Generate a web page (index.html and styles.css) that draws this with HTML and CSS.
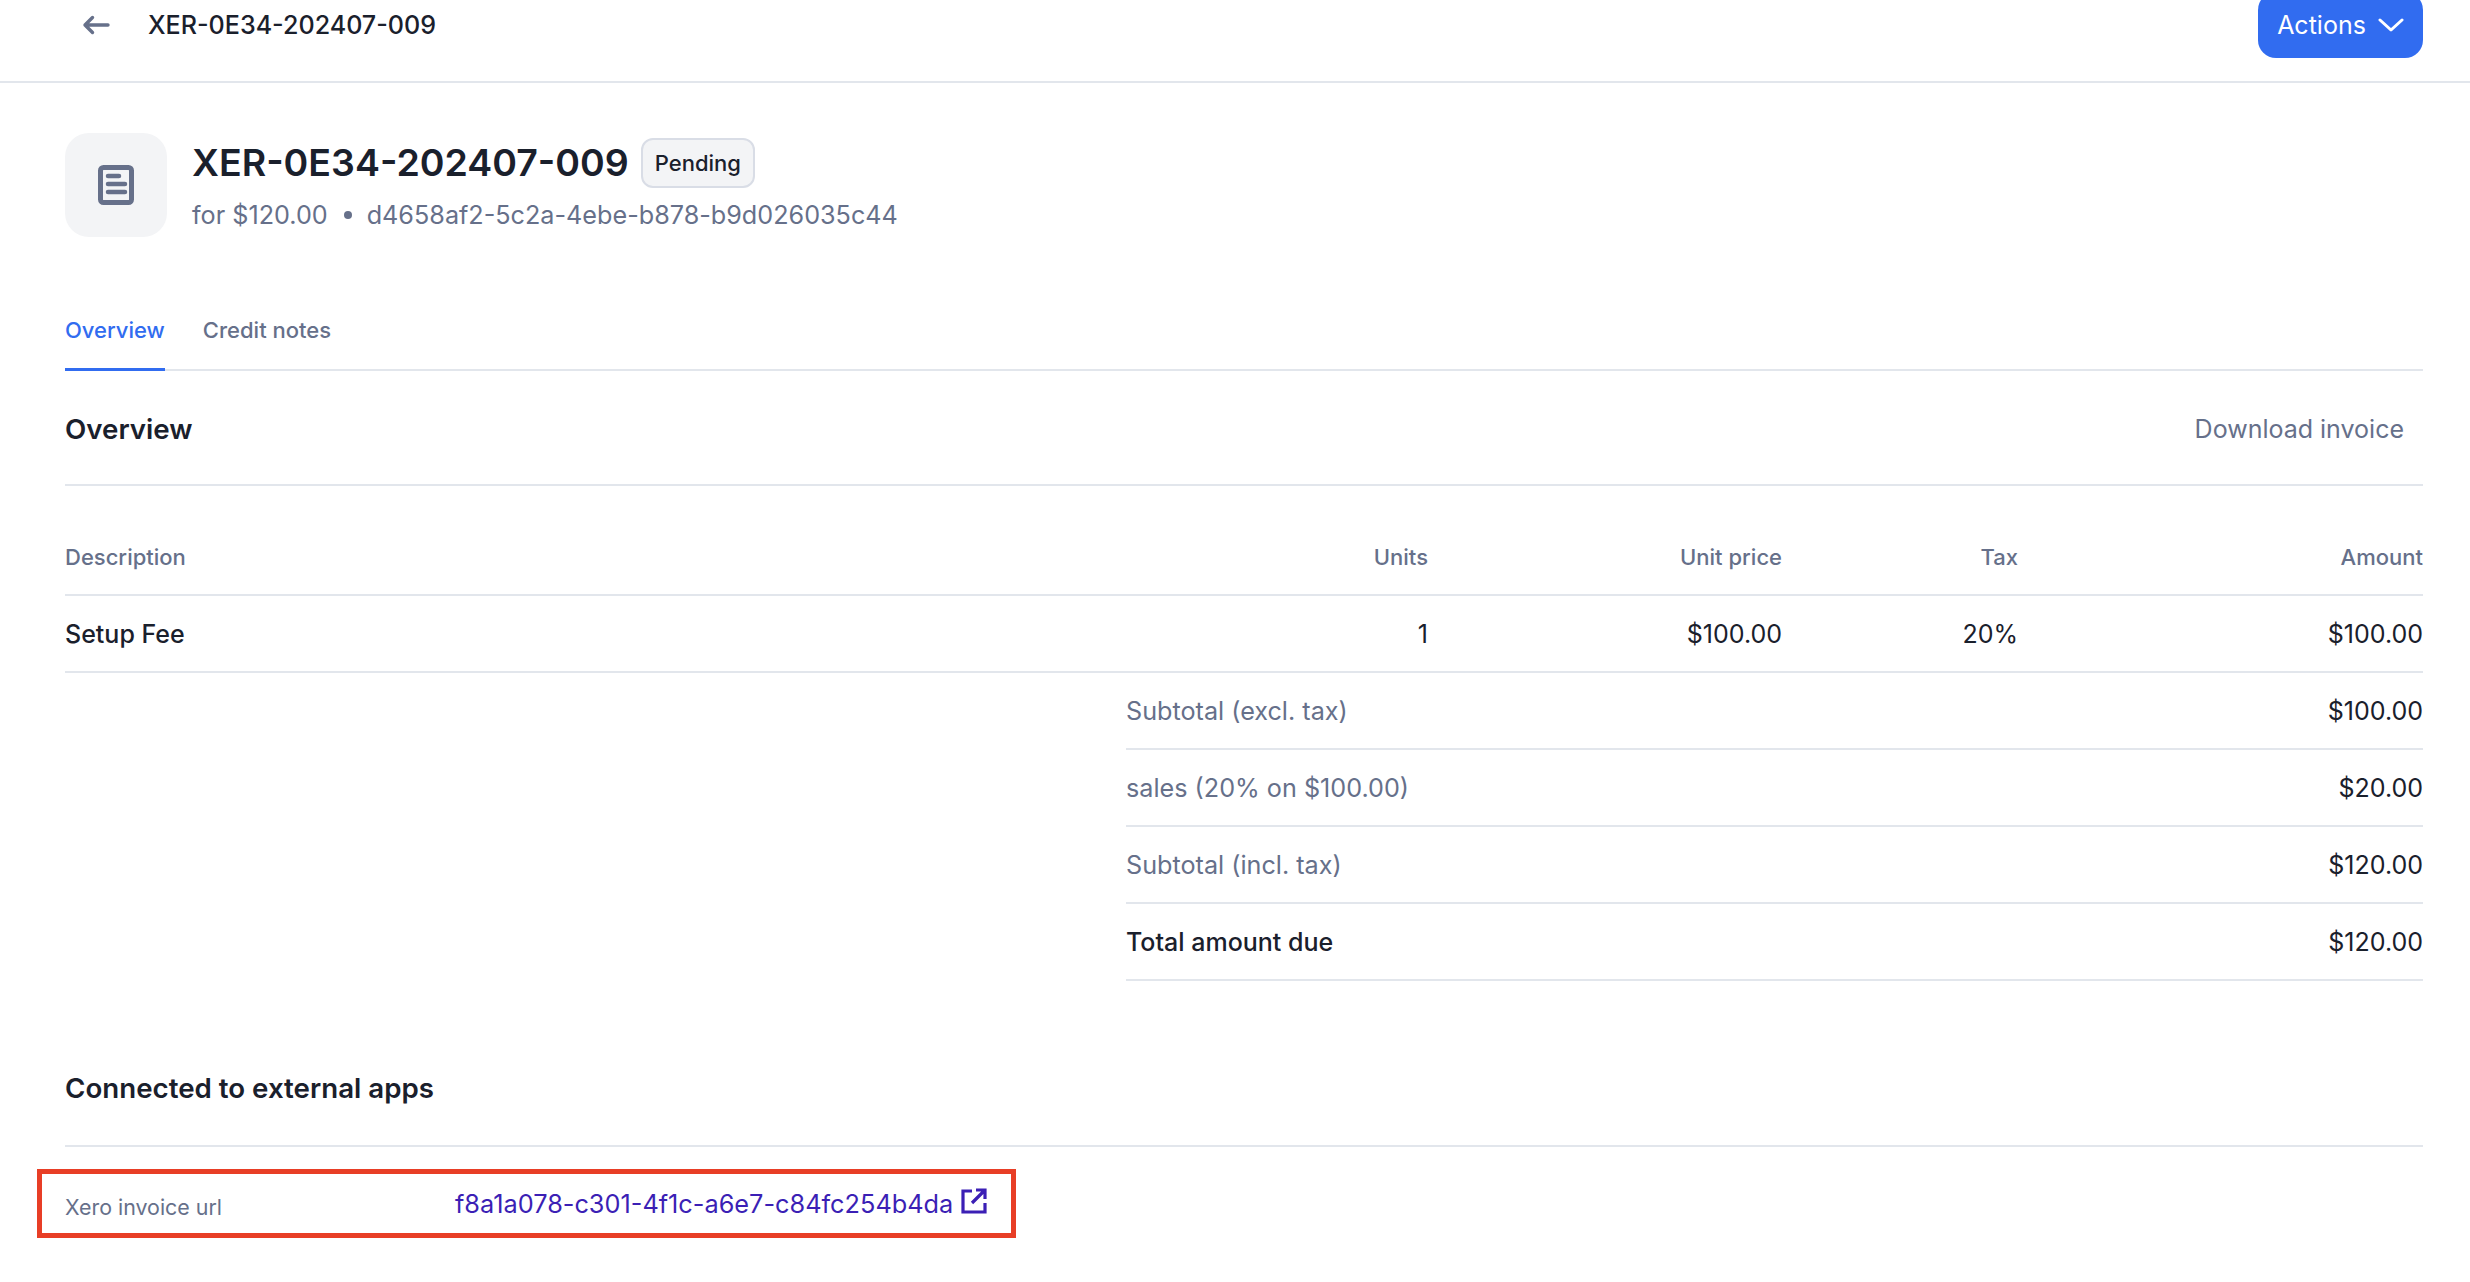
FILE: index.html
```html
<!DOCTYPE html>
<html lang="en">
<head>
<meta charset="utf-8">
<title>XER-0E34-202407-009</title>
<link rel="stylesheet" href="styles.css">
</head>
<body>
<header class="topbar">
  <div class="crumb">
    <svg class="back" viewBox="0 0 28 24" width="28" height="24" fill="none" stroke="currentColor" stroke-width="3.4" stroke-linecap="round" stroke-linejoin="round"><path d="M26 12H3M10.500 4.500 3 12l7.500 7.500"/></svg>
    <span class="crumb-title">XER-0E34-202407-009</span>
  </div>
  <button class="actions">Actions
    <svg viewBox="0 0 26 14" width="26" height="14" fill="none" stroke="currentColor" stroke-width="3" stroke-linecap="round" stroke-linejoin="round"><path d="M2 2l11 10L24 2"/></svg>
  </button>
</header>
<main class="content">
  <section class="head">
    <div class="doc-icon">
      <svg viewBox="0 0 36 40" width="36" height="40" fill="none"><rect x="2.500" y="2.500" width="31" height="35" rx="3" stroke="#66708a" stroke-width="5"/><path d="M10 11h11M10 19h17M10 27h17" stroke="#66708a" stroke-width="4.500" stroke-linecap="round"/></svg>
    </div>
    <div class="head-text">
      <div class="title-row">
        <h1>XER-0E34-202407-009</h1>
        <span class="badge">Pending</span>
      </div>
      <p class="sub"><span>for $120.00</span><i class="dot"></i><span>d4658af2-5c2a-4ebe-b878-b9d026035c44</span></p>
    </div>
  </section>

  <nav class="tabs">
    <a class="tab active">Overview</a>
    <a class="tab">Credit notes</a>
  </nav>

  <div class="section-head">
    <h2>Overview</h2>
    <a class="download">Download invoice</a>
  </div>

  <div class="table">
    <div class="row header">
      <span>Description</span><span class="r">Units</span><span class="r">Unit price</span><span class="r">Tax</span><span class="r">Amount</span>
    </div>
    <div class="row item">
      <span class="name">Setup Fee</span><span class="r">1</span><span class="r">$100.00</span><span class="r">20%</span><span class="r">$100.00</span>
    </div>
    <div class="total"><span class="muted">Subtotal (excl. tax)</span><span>$100.00</span></div>
    <div class="total"><span class="muted">sales (20% on $100.00)</span><span>$20.00</span></div>
    <div class="total"><span class="muted">Subtotal (incl. tax)</span><span>$120.00</span></div>
    <div class="total"><span class="name">Total amount due</span><span>$120.00</span></div>
  </div>

  <h2 class="connected">Connected to external apps</h2>

  <div class="highlight">
    <span class="ext-label">Xero invoice url</span>
    <a class="ext-link">f8a1a078-c301-4f1c-a6e7-c84fc254b4da
      <svg class="ext-icon" viewBox="0 0 26 26" width="26" height="26" fill="none" stroke="currentColor" stroke-width="3.200"><path d="M11 3H2v21h22v-9"/><path d="M15 2h9v9M24 2L11 15"/></svg>
    </a>
  </div>
</main>
</body>
</html>
```

FILE: styles.css
```css
* { box-sizing: border-box; }
html, body { margin: 0; padding: 0; background: #fff; }
body { font-family: Inter, "Liberation Sans", sans-serif; color: #1a202c; font-size: 25px; overflow: hidden; height: 1282px; }
h1, h2, p { margin: 0; }

.topbar { height: 91px; margin-top: -8px; padding: 0 47px 0 82px; border-bottom: 2px solid #e2e6ec; display: flex; justify-content: space-between; align-items: flex-start; }
.crumb { display: flex; align-items: center; height: 66px; }
.back { color: #66708a; }
.crumb-title { margin-left: 38px; font-weight: 500; font-size: 25.1px; }
.actions { width: 165px; height: 66px; border: 0; border-radius: 18px; background: #316cf0; color: #fff; font: 400 25px Inter, sans-serif; display: flex; align-items: center; justify-content: center; gap: 12px; padding: 0; }

.content { padding: 50px 47px 0 65px; }

.head { display: flex; height: 104px; gap: 25px; }
.doc-icon { width: 102px; height: 104px; border-radius: 24px; background: #f3f4f6; display: flex; align-items: center; justify-content: center; }
.head-text { display: flex; flex-direction: column; }
.title-row { display: flex; align-items: center; gap: 12px; height: 50px; margin-top: 5px; }
h1 { font-size: 37.5px; font-weight: 600; line-height: 50px; }
.badge { height: 50px; padding: 0 12px; border: 2px solid #d9dde6; border-radius: 12px; background: #f3f4f6; font-size: 22px; font-weight: 500; display: flex; align-items: center; }
.sub { color: #66708a; font-size: 25.2px; line-height: 36px; margin-top: 9px; display: flex; align-items: center; }
.dot { width: 8px; height: 8px; border-radius: 50%; background: #66708a; margin: 0 15px 0 16px; }

.tabs { display: flex; gap: 38px; margin-top: 65px; border-bottom: 2px solid #e2e6ec; height: 69px; }
.tab { font-size: 22px; font-weight: 500; color: #66708a; line-height: 56px; height: 69px; }
.tab.active { color: #316cf0; border-bottom: 3px solid #316cf0; }

.section-head { display: flex; justify-content: space-between; align-items: center; height: 115px; border-bottom: 2px solid #e2e6ec; padding: 3px 19px 0 0; }
h2 { font-size: 27.7px; font-weight: 600; }
.download { color: #66708a; font-size: 25px; }

.table { margin-top: 33px; }
.row { display: grid; grid-template-columns: 1fr 300px 354px 236px 405px; align-items: center; border-bottom: 2px solid #e2e6ec; height: 77px; }
.row.header { height: 77px; color: #66708a; font-size: 22px; font-weight: 500; }
.r { text-align: right; }
.name { font-weight: 500; }
.total { margin-left: 1061px; display: flex; justify-content: space-between; align-items: center; height: 77px; border-bottom: 2px solid #e2e6ec; }
.muted { color: #66708a; font-size: 25.2px; }

.connected { margin-top: 87px; font-size: 27.7px; line-height: 40px; padding-bottom: 37px; border-bottom: 2px solid #e2e6ec; }

.highlight { margin: 22px 0 0 -28px; width: 979px; height: 69px; border: 5px solid #e83e26; padding: 0 0 0 23px; display: flex; align-items: center; }
.ext-label { width: 390px; color: #66708a; font-size: 21.4px; padding-top: 6px; }
.ext-link { color: #3b1fb5; font-size: 25.3px; display: flex; align-items: center; gap: 8px; }
.ext-icon { margin-top: -6px; }
```
